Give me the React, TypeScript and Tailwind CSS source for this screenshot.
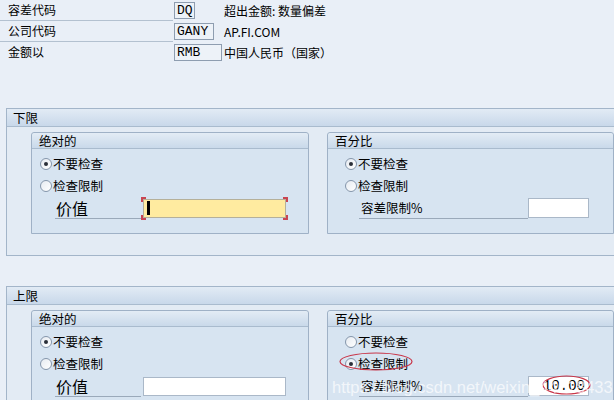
import React from "react";

function Radio({ checked, label }: { checked?: boolean; label: string }) {
    return (
        <div className="h-[22px] flex items-center">
            <span className="w-[12px] h-[12px] rounded-full border border-[#8596ab] bg-gradient-to-br from-[#e6ebf1] to-white flex items-center justify-center">
                {checked && <span className="w-[4px] h-[4px] rounded-full bg-[#2a2f38]" />}
            </span>
            <span className="ml-[1px] text-[12.5px] leading-none">{label}</span>
        </div>
    );
}

function GroupBox({ title, width, children }: { title: string; width: string; children: React.ReactNode }) {
    return (
        <div className={`${width} border border-[#9fb1c6] rounded-t-[3px] bg-[#d7e4f1]`}>
            <div className="h-[16px] border-b border-[#a9bbce] bg-gradient-to-b from-[#e3ecf5] to-[#c9d9ea] pl-[7px] text-[12.5px] leading-[15px] rounded-t-[3px]">
                {title}
            </div>
            <div className="pt-[4px] pb-[14px]">{children}</div>
        </div>
    );
}

function Section({ title, upper }: { title: string; upper?: boolean }) {
    return (
        <div className="ml-[6px] w-[620px] border-t border-l border-b border-[#a3b5c9] bg-[#e3ebf4]">
            <div className="h-[18px] border-b border-[#a9bbce] bg-gradient-to-b from-[#e2ebf5] to-[#c8d8ea] pl-[6px] text-[12.5px] leading-[17px]">
                {title}
            </div>
            <div className="pt-[5px] pb-[21px] pl-[24px] flex gap-[18px]">
                <GroupBox title="绝对的" width="w-[278px]">
                    <div className="pl-[8px]">
                        <Radio checked label="不要检查" />
                        <Radio label="检查限制" />
                    </div>
                    <div className="h-[22px] flex items-center pl-[23px]">
                        <div className="w-[86px] h-[21px] border-b border-[#9aa9ba] text-[16px] leading-[20px] pl-[1px]">价值</div>
                        {upper ? (
                            <div className="ml-[2px] w-[143px] h-[19px] bg-white border border-[#aab8c8]" />
                        ) : (
                            <div className="ml-[2px] relative w-[143px] h-[19px] bg-[#ffeba0] border border-[#b5b09a] flex items-center pl-[3px]">
                                <span className="w-[3px] h-[14px] bg-black" />
                                <span className="absolute -left-[3px] -top-[3px] w-[5px] h-[5px] border-l-2 border-t-2 border-[#c84552]" />
                                <span className="absolute -left-[3px] -bottom-[3px] w-[5px] h-[5px] border-l-2 border-b-2 border-[#c84552]" />
                                <span className="absolute -right-[3px] -top-[3px] w-[5px] h-[5px] border-r-2 border-t-2 border-[#c84552]" />
                                <span className="absolute -right-[3px] -bottom-[3px] w-[5px] h-[5px] border-r-2 border-b-2 border-[#c84552]" />
                            </div>
                        )}
                    </div>
                </GroupBox>
                <GroupBox title="百分比" width="w-[287px]">
                    <div className="pl-[17px]">
                        <Radio checked={!upper} label="不要检查" />
                        <Radio checked={upper} label="检查限制" />
                    </div>
                    <div className="h-[22px] flex items-center pl-[31px]">
                        <div className="w-[169px] h-[21px] border-b border-[#9aa9ba] text-[12.5px] leading-[20px] pl-[2px]">容差限制%</div>
                        <div className="w-[61px] h-[20px] bg-white border border-[#aab8c8] flex items-center justify-end pr-[3px] font-['Liberation_Mono',monospace] text-[14px]">
                            {upper ? "10.00" : ""}
                        </div>
                    </div>
                </GroupBox>
            </div>
        </div>
    );
}

const header = [
    { label: "容差代码", value: "DQ", w: "w-[21px]", desc: "超出金额: 数量偏差", line: true },
    { label: "公司代码", value: "GANY", w: "w-[40px]", desc: "AP.FI.COM", line: true },
    { label: "金额以", value: "RMB", w: "w-[48px]", desc: "中国人民币（国家）", line: false },
];

export default function App() {
    return (
        <div className="relative w-[614px] h-[400px] overflow-hidden bg-[#e9eff7] text-black font-['Noto_Sans_CJK_SC','Noto_Sans',sans-serif]">
            <div className="pt-[0px]">
                {header.map((r) => (
                    <div key={r.label} className="h-[21px] flex items-center">
                        <div className={`w-[173px] h-full pl-[8px] text-[12px] leading-[20px] ${r.line ? "border-b border-[#b3c1d0]" : ""}`}>
                            {r.label}
                        </div>
                        <div className={`${r.w} ml-[1px] h-[17px] border border-[#8e9db0] bg-[#edf2f8] pl-[2px] font-['Liberation_Mono',monospace] text-[13px] leading-[15px]`}>
                            {r.value}
                        </div>
                        <div className="absolute left-[224px] text-[12px]">{r.desc}</div>
                    </div>
                ))}
            </div>
            <div className="mt-[45px]">
                <Section title="下限" />
            </div>
            <div className="mt-[30px]">
                <Section title="上限" upper />
            </div>

            {/* red annotation circles + watermark */}
            <svg className="absolute left-0 top-0 pointer-events-none" width="614" height="400">
                <ellipse cx="376" cy="361.5" rx="36" ry="8.5" fill="none" stroke="#c9374a" strokeWidth="1.2" />
                <ellipse cx="566.5" cy="385" rx="23.5" ry="9" fill="none" stroke="#c9374a" strokeWidth="1.2" />
            </svg>
            <div className="absolute left-[332px] top-[375px] text-[16.5px] font-['Liberation_Sans',sans-serif] text-white/70 whitespace-nowrap pointer-events-none">
                https://blog.csdn.net/weixin_44018433
            </div>
        </div>
    );
}
